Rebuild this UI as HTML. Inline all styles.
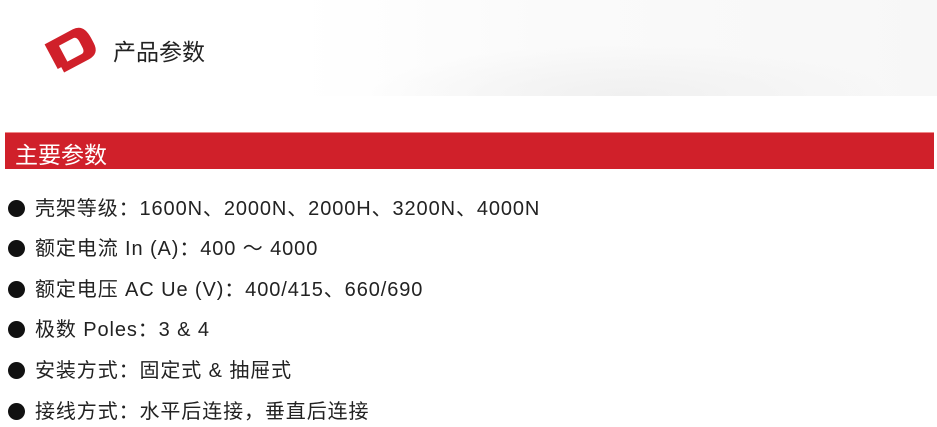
<!DOCTYPE html>
<html><head><meta charset="utf-8"><style>
body{margin:0;width:937px;height:427px;background:#fff;position:relative;overflow:hidden;font-family:"Liberation Sans","Noto Sans CJK SC",sans-serif;}
.bg{position:absolute;left:300px;top:0;width:637px;height:96px;background:radial-gradient(ellipse 260px 50px at 330px 95px,#f0f0f0,rgba(255,255,255,0)),linear-gradient(90deg,#fff,#fafafa 40%,#f7f7f7);}
.title{position:absolute;left:113px;top:33px;font-size:23px;color:#222;}
.bar{position:absolute;left:5px;top:132px;width:929px;height:36px;background:#d0202a;border-top:1px solid #e88;}
.bar span{position:absolute;left:10px;top:3px;color:#fff;font-size:23px;}
.row{position:absolute;left:8px;font-size:20px;letter-spacing:0.9px;color:#222;white-space:nowrap;}
.row i{display:inline-block;width:17px;height:17px;border-radius:50%;background:#111;vertical-align:-2px;margin-right:10px;}
</style></head><body>
<div class="bg"></div>
<svg style="position:absolute;left:40px;top:20px" width="65" height="58" viewBox="0 0 65 58">
<g transform="rotate(-28 32 29)">
<path d="M10 12 H42 Q54 12 54 28 V34 Q54 46 42 46 H14 V40 H10 Z M22 20 V38 H38 Q42 38 42 32 V26 Q42 20 38 20 Z" fill="#d0202a" fill-rule="evenodd"/>
</g></svg>
<div class="title">产品参数</div>
<div class="bar"><span>主要参数</span></div>
<div class="row" style="top:192px"><i></i>壳架等级：1600N、2000N、2000H、3200N、4000N</div>
<div class="row" style="top:232px"><i></i>额定电流 In (A)：400 ～ 4000</div>
<div class="row" style="top:273px"><i></i>额定电压 AC Ue (V)：400/415、660/690</div>
<div class="row" style="top:313px"><i></i>极数 Poles：3 &amp; 4</div>
<div class="row" style="top:354px"><i></i>安装方式：固定式 &amp; 抽屉式</div>
<div class="row" style="top:395px"><i></i>接线方式：水平后连接，垂直后连接</div>
</body></html>
